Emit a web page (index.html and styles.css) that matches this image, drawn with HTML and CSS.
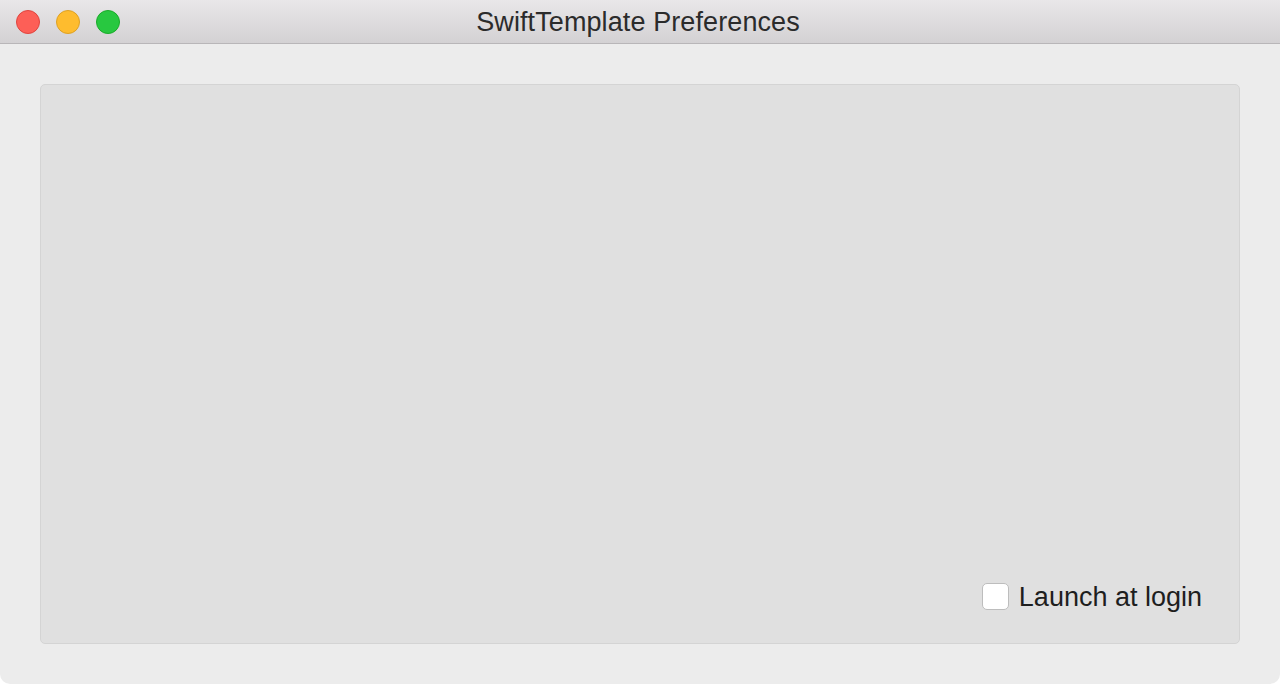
FILE: index.html
```html
<!DOCTYPE html>
<html>
<head>
<meta charset="utf-8">
<link rel="stylesheet" href="styles.css">
</head>
<body>
<div class="window">
  <div class="titlebar">
    <div class="lights">
      <span class="light red"></span>
      <span class="light yellow"></span>
      <span class="light green"></span>
    </div>
    <div class="title">SwiftTemplate Preferences</div>
  </div>
  <div class="content">
    <div class="panel">
      <label class="check">
        <span class="box"></span>
        <span class="label">Launch at login</span>
      </label>
    </div>
  </div>
</div>
</body>
</html>
```
FILE: styles.css
```css
html, body {
  margin: 0;
  padding: 0;
  background: #ffffff;
}
body {
  width: 1280px;
  height: 684px;
  overflow: hidden;
  font-family: "Liberation Sans", Arial, sans-serif;
}
.window {
  width: 1280px;
  height: 684px;
  background: #ececec;
  border-radius: 0 0 10px 10px;
  overflow: hidden;
  display: flex;
  flex-direction: column;
}
.titlebar {
  height: 43px;
  border-bottom: 1px solid #b8b6b8;
  background: linear-gradient(#e9e7e9, #d3d1d3);
  position: relative;
  display: flex;
  align-items: center;
  justify-content: center;
  flex-shrink: 0;
}
.lights {
  position: absolute;
  left: 16px;
  top: 10px;
  display: flex;
  gap: 16px;
}
.light {
  width: 22px;
  height: 22px;
  border-radius: 50%;
  display: block;
}
.red { background: #fd5f57; border: 1px solid #e0443e; }
.yellow { background: #febc2e; border: 1px solid #dea123; }
.green { background: #28c840; border: 1px solid #1aab29; }
.title {
  font-size: 27px;
  color: #2b2b2b;
  margin-left: -4px;
  padding-top: 2px;
  letter-spacing: 0.1px;
}
.content {
  flex: 1;
  padding: 40px;
  display: flex;
}
.panel {
  flex: 1;
  background: #e0e0e0;
  border: 1px solid #d4d4d4;
  border-radius: 5px;
  display: flex;
  align-items: flex-end;
  justify-content: flex-end;
  padding: 0 37px 32px 0;
}
.check {
  display: flex;
  align-items: center;
  gap: 10px;
}
.box {
  background: #ffffff;
  border: 1px solid #bdbdbd;
  border-radius: 5px;
  box-sizing: border-box;
  width: 27px;
  height: 27px;
}
.label {
  font-size: 27px;
  line-height: 27px;
  color: #1e1e1e;
  padding-top: 2px;
}
```
